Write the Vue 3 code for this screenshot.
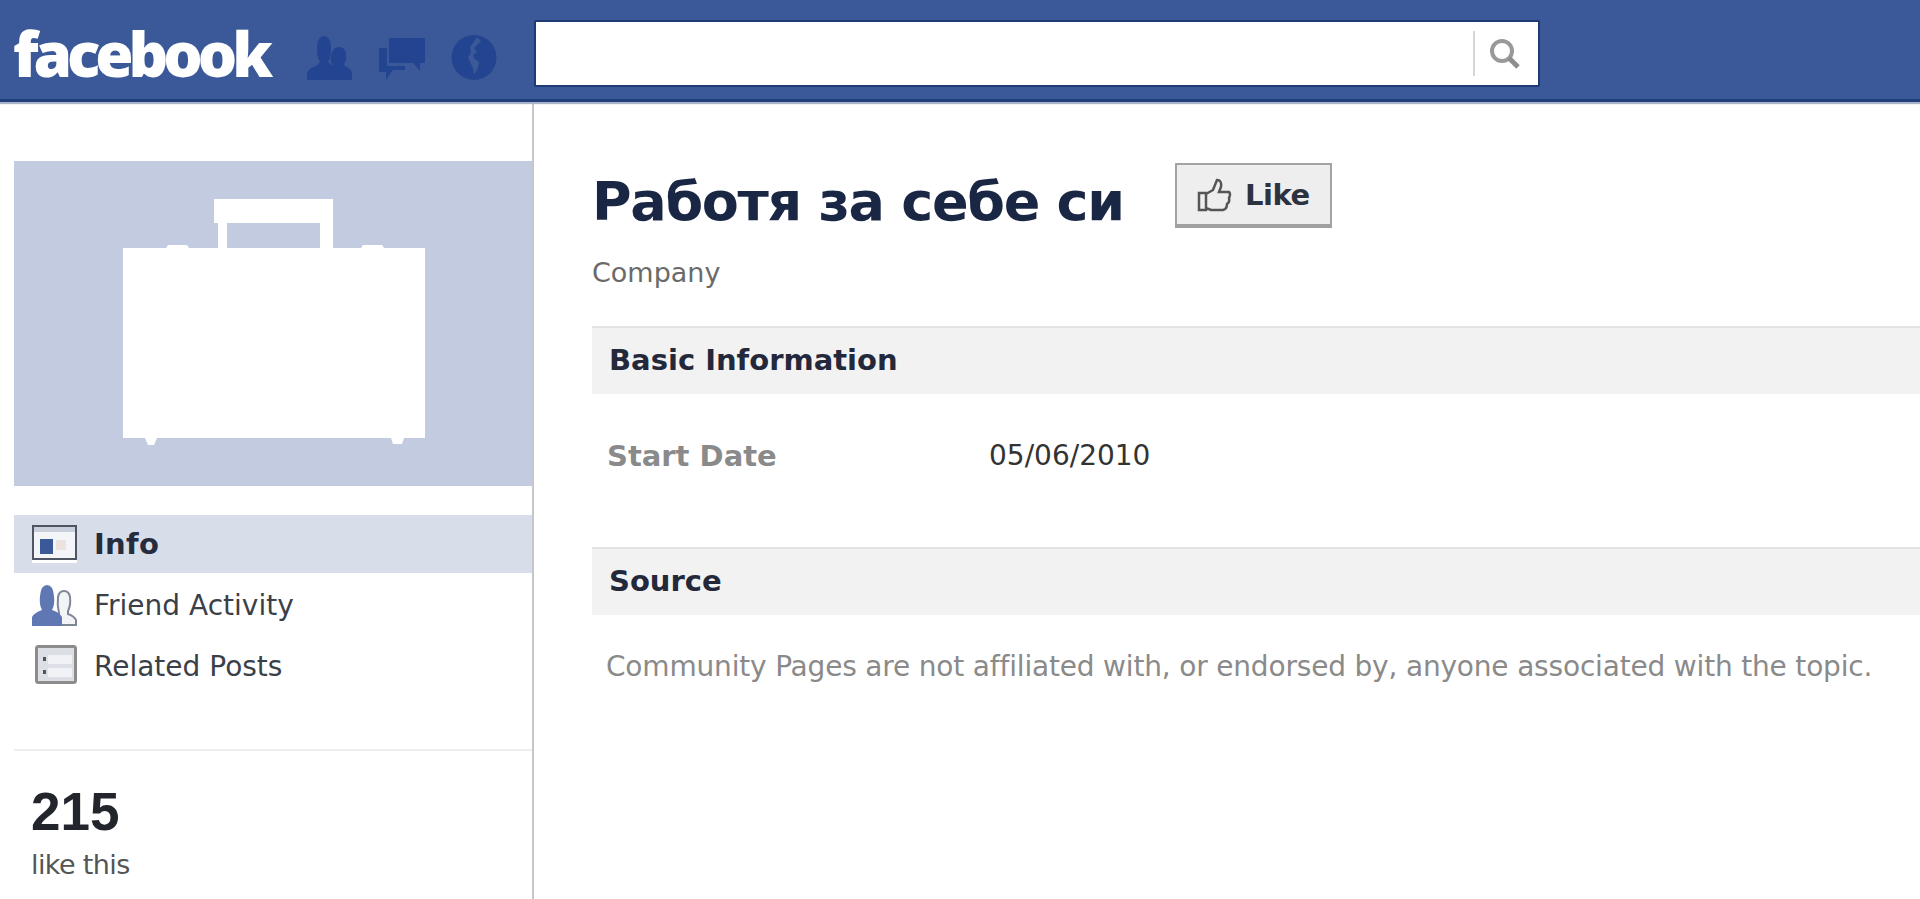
<script setup>
const navItems = [
  { key: 'info', label: 'Info', active: true },
  { key: 'friends', label: 'Friend Activity', active: false },
  { key: 'posts', label: 'Related Posts', active: false },
]
</script>

<template>
  <div class="page">
    <header class="topbar">
      <div class="logo">facebook</div>
      <div class="jewels">
        <svg class="jewel" width="46" height="46" viewBox="0 0 46 46">
          <path d="M0 45 L0 38 Q2 33 9 31 L13 27 Q10 23 10 15 Q10 1 17 1 Q24 1 24 15 Q24 23 21 27 L24 30 L25 30 Q23 25 24.500 19 Q26 12 32 12 Q38 12 39 19 Q40 25 37 29 L38 31 Q43 33 45 37 L45 45 Z" />
        </svg>
        <svg class="jewel chat" width="46" height="46" viewBox="0 0 46 46">
          <path d="M10 3 L46 3 L46 28 L41 28 L41 36 L34 28 L10 28 Z" />
          <path d="M0 13 L8 13 L8 31 L26 31 L26 35 L14 35 L7 45 L7 37 L0 37 Z" />
        </svg>
        <svg class="jewel" width="46" height="46" viewBox="0 0 46 46">
          <path fill-rule="evenodd" d="M23 0 A22.500 22.500 0 1 0 23 45 A22.500 22.500 0 1 0 23 0 Z M26 2 L30 6 L26 10 L23 13 L26 17 L22 20 L24 24 L28 27 L27 33 L23 40 L22 33 L19 27 L17 22 L20 18 L19 12 L22 8 Z" />
        </svg>
      </div>
      <div class="search">
        <input class="search-input" type="text" />
        <span class="search-sep"></span>
        <svg class="search-icon" width="36" height="36" viewBox="0 0 36 36">
          <circle cx="15" cy="15" r="10" fill="none" stroke="#999999" stroke-width="4" />
          <path d="M22 22 L31 31" stroke="#8e8e8e" stroke-width="5" />
        </svg>
      </div>
    </header>

    <div class="body">
      <aside class="sidebar">
        <div class="picture">
          <svg class="case" width="518" height="325" viewBox="0 0 518 325">
            <path fill="#fff" fill-rule="evenodd" d="M109 87 L152 87 L154 84 L173 84 L175 87 L204 87 L204 62 L200 62 L200 38 L319 38 L319 62 L319 87 L347 87 L349 84 L368 84 L370 87 L411 87 L411 277 L390 277 L388 283 L379 283 L377 277 L143 277 L140 284 L134 284 L131 277 L109 277 Z M213 62 L213 87 L306 87 L306 62 Z" />
          </svg>
        </div>

        <nav class="nav">
          <a v-for="item in navItems" :key="item.key" class="nav-item" :class="{ active: item.active }">
            <span class="nav-icon">
              <svg v-if="item.key === 'info'" width="45" height="38" viewBox="0 0 45 38">
                <rect x="1" y="1" width="43" height="33" fill="#f3f5f9" stroke="#4f5563" stroke-width="2" />
                <rect x="2" y="2" width="41" height="5" fill="#c9cfdb" />
                <rect x="8" y="14" width="13" height="15" fill="#3b5998" />
                <rect x="24" y="15" width="10" height="10" fill="#ece3de" />
                <rect x="0" y="35" width="45" height="3" fill="#ffffff" />
              </svg>
              <svg v-else-if="item.key === 'friends'" width="45" height="42" viewBox="0 0 45 42">
                <path fill="#f2f4f8" stroke="#7e8798" stroke-width="2" d="M27 29 Q25 21 26 13 Q27 7 32 7 Q37 7 38 13 Q39 21 36 27 L36 30 Q42 32 44 36 L44 41 L27 41 Z" />
                <path fill="#5f78b4" d="M0 42 L0 33 Q2 29 10 26 Q7 21 8 12 Q9 1 15 1 Q21 1 22 12 Q23 21 20 26 Q27 28 30 33 L30 42 Z" />
              </svg>
              <svg v-else width="45" height="42" viewBox="0 0 45 42">
                <rect x="4.500" y="1.500" width="39" height="36" rx="2" fill="#dcdfe6" stroke="#8c8c8c" stroke-width="3" />
                <rect x="16" y="10" width="24" height="9" fill="#f1f2f5" />
                <rect x="16" y="23" width="24" height="9" fill="#f1f2f5" />
                <rect x="11" y="12" width="3" height="4" fill="#555" />
                <rect x="11" y="25" width="3" height="4" fill="#555" />
              </svg>
            </span>
            <span class="nav-label">{{ item.label }}</span>
          </a>
        </nav>

        <div class="likes">
          <div class="likes-count">215</div>
          <div class="likes-text">like this</div>
        </div>
      </aside>

      <main class="main">
        <div class="title-row">
          <h1 class="title">Работя за себе си</h1>
          <button class="like-btn" type="button">
            <svg class="thumb" width="36" height="36" viewBox="0 0 36 36">
              <path fill="none" stroke="#555" stroke-width="2.500" d="M2 15 L9 15 L9 32 L2 32 Z M9 16 L16 12 L20 2 Q25 2 24 9 L22 14 L32 14 Q34 16 32 20 Q33 24 30 26 Q30 31 26 32 L14 32 L9 30" />
            </svg>
            <span>Like</span>
          </button>
        </div>
        <div class="subtitle">Company</div>

        <section class="section">
          <h2 class="section-head">Basic Information</h2>
          <div class="info-row">
            <span class="info-key">Start Date</span>
            <span class="info-value">05/06/2010</span>
          </div>
        </section>

        <section class="section source">
          <h2 class="section-head">Source</h2>
          <p class="note">Community Pages are not affiliated with, or endorsed by, anyone associated with the topic.</p>
        </section>
      </main>
    </div>
  </div>
</template>

<style>
html, body { margin: 0; padding: 0; background: #fff; overflow: hidden; }
</style>

<style scoped>
.page {
  width: 1920px;
  height: 899px;
  overflow: hidden;
  display: flex;
  flex-direction: column;
  font-family: "DejaVu Sans", Tahoma, sans-serif;
  background: #fff;
}
.topbar {
  flex: none;
  height: 99px;
  box-sizing: content-box;
  background: #3b5998;
  border-bottom: 3px solid #223f7c;
  box-shadow: 0 2px 1px #a9b3c9;
  display: flex;
  align-items: center;
  position: relative;
}
.logo {
  width: 307px;
  flex: none;
  padding-left: 13px;
  box-sizing: border-box;
  font-family: "Open Sans", sans-serif;
  font-weight: 800;
  font-size: 62px;
  letter-spacing: -5.100px;
  color: #fff;
  line-height: 1;
  margin-top: 7px;
}
.jewels {
  width: 227px;
  flex: none;
  display: flex;
  gap: 26px;
  margin-top: 16px;
}
.jewel { fill: #234490; flex: none; }
.search {
  width: 1006px;
  height: 67px;
  flex: none;
  box-sizing: border-box;
  margin-top: 8px;
  background: #fff;
  border: 2px solid #1f3a75;
  border-radius: 2px;
  display: flex;
  align-items: center;
}
.search-input {
  flex: 1;
  min-width: 0;
  height: 100%;
  border: 0;
  outline: 0;
  background: transparent;
}
.search-sep {
  width: 2px;
  height: 45px;
  background: #d5d5d5;
}
.search-icon { margin: 0 15px 0 12px; }
.body { flex: 1; display: flex; min-height: 0; }
.sidebar {
  width: 534px;
  flex: none;
  box-sizing: border-box;
  padding: 59px 0 0 14px;
  border-right: 2px solid #c4c7cc;
}
.picture {
  height: 325px;
  background: #c2cbdf;
}
.case { display: block; }
.nav {
  margin-top: 29px;
  height: 236px;
  box-sizing: border-box;
  border-bottom: 2px solid #eeeeee;
}
.nav-item {
  display: flex;
  align-items: center;
  height: 58px;
  margin-bottom: 3px;
  padding-left: 18px;
  color: #3b3f48;
  font-family: "DejaVu Sans", sans-serif;
  font-size: 28px;
}
.nav-item.active {
  background: #d7deea;
  color: #262c3d;
  font-weight: 700;
  font-size: 29px;
  letter-spacing: 0.300px;
}
.nav-icon {
  width: 45px;
  height: 42px;
  margin-right: 17px;
  display: flex;
  align-items: center;
}
.likes { padding: 31px 0 0 17px; }
.likes-count {
  font-family: "Liberation Sans", sans-serif;
  font-weight: 700;
  font-size: 53px;
  line-height: 60px;
  color: #22252c;
}
.likes-text {
  margin-top: 6px;
  font-size: 27px;
  line-height: 34px;
  letter-spacing: -0.600px;
  color: #555;
}
.main { flex: 1; min-width: 0; padding: 57px 0 0 58px; }
.title-row {
  display: flex;
  align-items: flex-start;
  height: 78px;
}
.title {
  margin: 0;
  width: 583px;
  flex: none;
  padding-top: 8px;
  font-family: "DejaVu Sans", sans-serif;
  font-size: 54px;
  letter-spacing: -1.300px;
  font-weight: 700;
  line-height: 70px;
  color: #1a2744;
  white-space: nowrap;
}
.like-btn {
  width: 157px;
  height: 65px;
  margin-top: 4px;
  padding: 0 0 0 20px;
  display: flex;
  align-items: center;
  gap: 12px;
  box-sizing: border-box;
  background: #eeeeee;
  border: 2px solid #a3a3a3;
  border-bottom: 4px solid #a0a0a0;
  font-family: "DejaVu Sans", sans-serif;
  font-weight: 700;
  font-size: 29px;
  letter-spacing: -0.500px;
  color: #2d3240;
}
.thumb { margin-top: 3px; }
.subtitle {
  margin-top: 16px;
  height: 73px;
  font-size: 27px;
  line-height: 40px;
  color: #6a6a6a;
}
.section-head {
  margin: 0;
  height: 68px;
  box-sizing: border-box;
  padding-left: 17px;
  background: #f2f2f2;
  border-top: 2px solid #e3e3e3;
  font-family: "DejaVu Sans", sans-serif;
  font-size: 29px;
  font-weight: 700;
  line-height: 64px;
  color: #23283a;
}
.info-row {
  display: flex;
  align-items: center;
  height: 153px;
  padding: 0 0 30px 15px;
  box-sizing: border-box;
}
.info-key {
  width: 382px;
  flex: none;
  color: #8a8a8a;
  font-weight: 700;
  font-size: 29px;
}
.info-value {
  color: #333;
  font-size: 28px;
}
.note {
  margin: 30px 0 0;
  padding-left: 14px;
  font-size: 28px;
  line-height: 44px;
  letter-spacing: -0.180px;
  color: #8a8a8a;
  white-space: nowrap;
}
</style>
